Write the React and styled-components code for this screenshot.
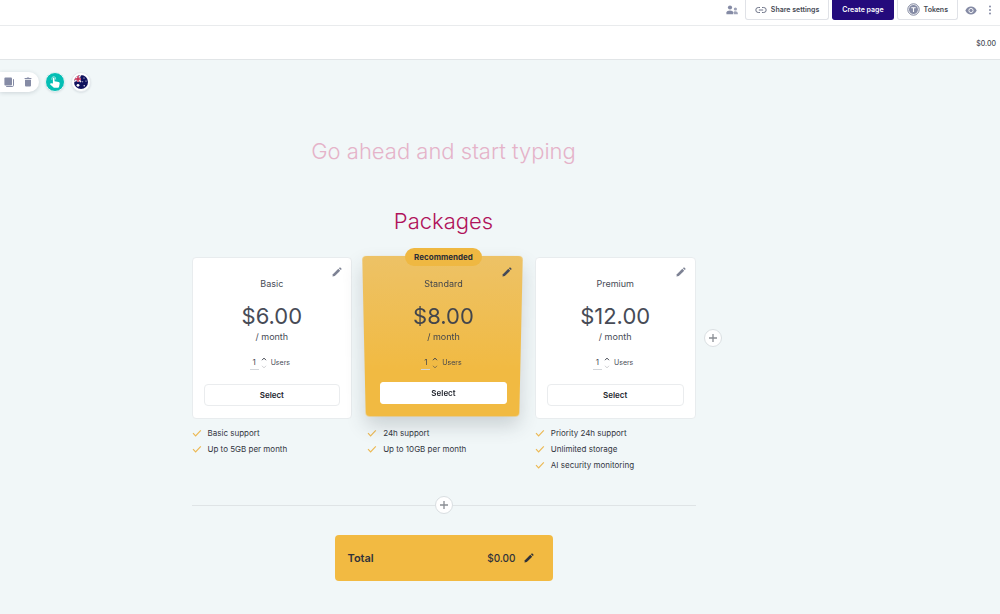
import React, { useState } from "react";
import styled, { createGlobalStyle, css } from "styled-components";

const packages = [
  {
    name: "Basic",
    price: "$6.00",
    features: ["Basic support", "Up to 5GB per month"]
  },
  {
    name: "Standard",
    price: "$8.00",
    recommended: true,
    features: ["24h support", "Up to 10GB per month"]
  },
  {
    name: "Premium",
    price: "$12.00",
    features: ["Priority 24h support", "Unlimited storage", "AI security monitoring"]
  }
];

// icons

const PencilIcon = ({ size = 10 }) => (
  <svg width={size} height={size} viewBox="0 0 10 10" fill="currentColor" aria-hidden="true">
    <path d="M0.5 9.5 L0.9 7.2 L6.3 1.8 L8.2 3.7 L2.8 9.1 Z" />
    <path d="M6.9 1.2 L7.6 0.6 Q8 0.3 8.4 0.6 L9.4 1.6 Q9.7 2 9.4 2.4 L8.8 3.1 Z" />
  </svg>
);

const PlusIcon = () => (
  <svg width="8" height="8" viewBox="0 0 8 8" stroke="currentColor" strokeWidth="1.3" aria-hidden="true">
    <path d="M4 0V8M0 4H8" />
  </svg>
);

const CheckIcon = () => (
  <svg width="10" height="8" viewBox="0 0 10 8" fill="none" stroke="#ecb954" strokeWidth="1.2" aria-hidden="true">
    <path d="M1 4.2L3.6 6.8L8.8 1.4" />
  </svg>
);

const ChevronIcon = ({ down }) => (
  <svg width="6" height="4" viewBox="0 0 6 4" fill="none" stroke="currentColor" strokeWidth="1" aria-hidden="true">
    <path d={down ? "M1 0.8L3 2.9L5 0.8" : "M1 3.2L3 1.1L5 3.2"} />
  </svg>
);

const PeopleIcon = () => (
  <svg width="12" height="10" viewBox="0 0 12 10" fill="currentColor" aria-hidden="true">
    <circle cx="4" cy="2.5" r="2.1" />
    <path d="M0.4 9.2V7.4Q0.8 5.4 4 5.4Q7 5.4 7.3 7.2V9.2Z" />
    <circle cx="9.4" cy="4" r="1.6" opacity="0.8" />
    <path d="M8 9.2V7.4Q8 6.9 7.8 6.4Q11.6 5.7 11.8 8V9.2Z" opacity="0.8" />
  </svg>
);

const LinkIcon = () => (
  <svg width="12" height="8" viewBox="0 0 12 8" fill="none" stroke="#6f7589" strokeWidth="1" aria-hidden="true">
    <path d="M5 1.5H3.3A2.5 2.5 0 0 0 3.3 6.5H5M7 1.5H8.7A2.5 2.5 0 0 1 8.7 6.5H7M3.8 4H8.2" />
  </svg>
);

const TokenIcon = () => (
  <svg width="13" height="13" viewBox="0 0 13 13" aria-hidden="true">
    <circle cx="6.5" cy="6.5" r="5.7" fill="#fff" stroke="#7d839c" strokeWidth="1" />
    <circle cx="6.5" cy="6.5" r="4.5" fill="#858ba5" />
    <path d="M4.3 4.7H8.7M6.5 4.7V9" stroke="#fff" strokeWidth="1.1" />
  </svg>
);

const EyeIcon = () => (
  <svg width="12" height="9" viewBox="0 0 12 9" aria-hidden="true">
    <path d="M0.3 4.5Q2.2 0.6 6 0.6Q9.8 0.6 11.7 4.5Q9.8 8.4 6 8.4Q2.2 8.4 0.3 4.5Z" fill="currentColor" />
    <circle cx="6" cy="4.5" r="2.1" fill="currentColor" stroke="#fff" strokeWidth="0.9" />
  </svg>
);

const DotsIcon = () => (
  <svg width="4" height="10" viewBox="0 0 4 10" fill="currentColor" aria-hidden="true">
    <circle cx="2" cy="1.4" r="1" />
    <circle cx="2" cy="5" r="1" />
    <circle cx="2" cy="8.6" r="1" />
  </svg>
);

const CopyIcon = () => (
  <svg width="10" height="10" viewBox="0 0 10 10" aria-hidden="true">
    <path d="M2.2 9.5H8.3Q9.5 9.5 9.5 8.3V2.2" fill="none" stroke="currentColor" strokeWidth="1" />
    <rect x="0.4" y="0.4" width="7.6" height="8" rx="1" fill="currentColor" />
  </svg>
);

const TrashIcon = () => (
  <svg width="8" height="10" viewBox="0 0 8 10" fill="currentColor" aria-hidden="true">
    <path d="M0.6 1H2.6L3.1 0.4H4.9L5.4 1H7.4V2H0.6Z" />
    <path d="M1 2.8H7V8.4Q7 9.4 6 9.4H2Q1 9.4 1 8.4Z" />
  </svg>
);

const HandIcon = () => (
  <svg width="12" height="13" viewBox="0 0 12 13" aria-hidden="true">
    <path
      d="M3.9 7.6V2.6Q3.9 1.6 4.7 1.6Q5.5 1.6 5.5 2.6V5.2L9.6 6.1Q10.8 6.4 10.7 7.5L10.1 10.6Q9.9 11.8 8.8 11.8H5.6Q4.8 11.8 4.3 11.2L1 8.2Q1.2 7.1 2.3 7.2Z"
      fill="#fff"
    />
    <path d="M2.8 3.8Q2.4 0.7 4.7 0.6Q7 0.7 6.7 3.6" fill="none" stroke="#b7ece8" strokeWidth="0.8" />
  </svg>
);

const FlagIcon = () => (
  <svg width="14" height="14" viewBox="0 0 14 14" aria-hidden="true">
    <clipPath id="flagRound">
      <circle cx="7" cy="7" r="7" />
    </clipPath>
    <g clipPath="url(#flagRound)">
      <rect width="14" height="14" fill="#10125e" />
      <path d="M0 0L7 7M7 0L0 7" stroke="#f6e7ed" strokeWidth="1.5" />
      <path d="M4 0V7M0 4H7" stroke="#f6e7ed" strokeWidth="2.4" />
      <path d="M4 0V7M0 4H7" stroke="#c5264c" strokeWidth="1.4" />
      <circle cx="4" cy="10.3" r="1.4" fill="#fff" />
      <circle cx="10" cy="3" r="0.6" fill="#fff" />
      <circle cx="12" cy="6" r="0.6" fill="#fff" />
      <circle cx="8.7" cy="6.8" r="0.5" fill="#fff" />
      <circle cx="10.2" cy="10.8" r="0.7" fill="#fff" />
    </g>
  </svg>
);

const PackageCard = ({ item }) => {
  const [users, setUsers] = useState(1);
  const id = "users-" + item.name;

  return (
    <Card $recommended={item.recommended}>
      {item.recommended && <Ribbon>Recommended</Ribbon>}
      <EditButton $dark={item.recommended} aria-label={"Edit " + item.name}>
        <PencilIcon />
      </EditButton>
      <CardTitle>{item.name}</CardTitle>
      <Price>{item.price}</Price>
      <Period>/ month</Period>
      <UsersRow>
        <UsersInput id={id} value={users} onChange={e => setUsers(Number(e.target.value) || 0)} />
        <Stepper $recommended={item.recommended}>
          <button aria-label="More users" onClick={() => setUsers(users + 1)}>
            <ChevronIcon />
          </button>
          <button aria-label="Fewer users" disabled={users < 2} onClick={() => setUsers(users - 1)}>
            <ChevronIcon down />
          </button>
        </Stepper>
        <label htmlFor={id}>Users</label>
      </UsersRow>
      <SelectButton $recommended={item.recommended}>Select</SelectButton>
    </Card>
  );
};

const App = () => (
  <>
    <GlobalStyle />
    <Header>
      <IconButton aria-label="People">
        <PeopleIcon />
      </IconButton>
      <HeaderActions>
        <HeaderButton>
          <LinkIcon />
          Share settings
        </HeaderButton>
        <HeaderButton $primary>Create page</HeaderButton>
        <HeaderButton>
          <TokenIcon />
          Tokens
        </HeaderButton>
      </HeaderActions>
      <MenuIcons>
        <IconButton aria-label="Preview">
          <EyeIcon />
        </IconButton>
        <IconButton aria-label="More">
          <DotsIcon />
        </IconButton>
      </MenuIcons>
    </Header>
    <SumBar>$0.00</SumBar>

    <Toolbar>
      <Pill>
        <IconButton aria-label="Copy">
          <CopyIcon />
        </IconButton>
        <IconButton aria-label="Delete">
          <TrashIcon />
        </IconButton>
      </Pill>
      <RoundButton $teal aria-label="Interact">
        <HandIcon />
      </RoundButton>
      <RoundButton aria-label="Language">
        <FlagIcon />
      </RoundButton>
    </Toolbar>

    <Page>
      <Content>
        <Headline aria-label="Headline" placeholder="Go ahead and start typing" />
        <SectionTitle>Packages</SectionTitle>
        <Packages>
          {packages.map(item => (
            <div key={item.name}>
              <PackageCard item={item} />
              <Features $indent={item.recommended}>
                {item.features.map(feature => (
                  <li key={feature}>
                    <CheckIcon />
                    {feature}
                  </li>
                ))}
              </Features>
            </div>
          ))}
          <AddPackage aria-label="Add package">
            <PlusIcon />
          </AddPackage>
        </Packages>
        <Divider>
          <AddButton aria-label="Add section">
            <PlusIcon />
          </AddButton>
        </Divider>
        <Total>
          <strong>Total</strong>
          <span>$0.00</span>
          <PlainButton aria-label="Edit total">
            <PencilIcon />
          </PlainButton>
        </Total>
      </Content>
    </Page>
  </>
);

const GlobalStyle = createGlobalStyle`
  * {
    box-sizing: border-box;
  }

  body {
    margin: 0;
    background: #f1f7f8;
    color: #474b56;
    font-family: Inter, "Liberation Sans", sans-serif;
    font-size: 8px;
  }

  button, input {
    font-family: inherit;
    color: inherit;
  }

  button {
    padding: 0;
    cursor: pointer;
  }

  svg {
    display: block;
    flex: none;
  }
`

const PlainButton = styled.button`
  border: none;
  background: transparent;
`

const IconButton = styled(PlainButton)`
  color: #858ba5;
`

const Header = styled.header`
  display: flex;
  justify-content: flex-end;
  height: 26px;
  padding: 0 8px 5px 0;
  background: #fff;
  border-bottom: 1px solid #e9ebed;
`

const HeaderActions = styled.div`
  display: flex;
  gap: 3px;
  margin: 0 7px;
`

const HeaderButton = styled.button`
  display: flex;
  align-items: center;
  gap: 4px;
  padding: 0 9px;
  border: 1px solid #e0e2e7;
  border-top: none;
  border-radius: 0 0 3px 3px;
  background: #fff;
  color: #454954;
  font-size: 7px;
  font-weight: 600;

  ${props => props.$primary && css`
    border-color: #240b7c;
    background: #240b7c;
    color: #fff;
  `}
`

const MenuIcons = styled.div`
  display: flex;
  gap: 11px;
`

const SumBar = styled.div`
  height: 34px;
  padding-right: 4px;
  background: #fff;
  border-bottom: 1px solid #e1e5e7;
  font-size: 7px;
  font-weight: 500;
  line-height: 35px;
  text-align: right;
`

const Toolbar = styled.div`
  display: flex;
  align-items: center;
  gap: 6px;
  padding-top: 12px;
`

const Pill = styled.div`
  display: flex;
  align-items: center;
  gap: 10px;
  height: 20px;
  padding: 0 7px 0 4px;
  border-radius: 0 10px 10px 0;
  background: #fff;
  box-shadow: 0 1px 4px rgba(40, 60, 80, 0.18);
`

const RoundButton = styled.button`
  display: grid;
  place-items: center;
  width: 20px;
  height: 20px;
  border: 1px solid #e6ebee;
  border-radius: 50%;
  background: #fff;
  box-shadow: 0 1px 2px rgba(40, 60, 80, 0.12);

  ${props => props.$teal && css`
    border-color: #e6f4f4;
    background: #04beb4;
  `}
`

const Page = styled.main`
  padding: 41px 113px 32px 0;
`

const Content = styled.div`
  width: 504px;
  max-width: 100%;
  margin: 0 auto;
`

const Headline = styled.input`
  display: block;
  width: 100%;
  height: 36px;
  padding: 0;
  border: none;
  outline: none;
  background: transparent;
  color: #b0125a;
  font-size: 22px;
  font-weight: 300;
  text-align: center;

  &::placeholder {
    color: #e5b3c9;
    opacity: 1;
  }
`

const SectionTitle = styled.h2`
  margin: 35px 0 19px;
  color: #b0125a;
  font-size: 22px;
  font-weight: 300;
  line-height: 34px;
  text-align: center;
`

const Packages = styled.section`
  position: relative;
  display: grid;
  grid-template-columns: repeat(3, 1fr);
  gap: 11px;
`

const Card = styled.article`
  position: relative;
  display: flex;
  flex-direction: column;
  align-items: center;
  height: 162px;
  padding: 20px 11px 12px;
  border: 1px solid #e8ecee;
  border-radius: 4px;
  background: #fff;

  ${props => props.$recommended && css`
    z-index: 0;
    padding: 20px 16px 14px;
    border-color: transparent;
    background: transparent;
    color: #42454c;

    /* tilted sheet behind the content */
    &::before {
      content: "";
      position: absolute;
      z-index: -1;
      inset: -1px 2px -1px 0;
      border-radius: 4px;
      background: linear-gradient(#edc266, #f1ba42 70%);
      box-shadow: 0 10px 20px rgba(50, 60, 70, 0.2);
      transform: perspective(500px) rotateX(-8deg);
    }
  `}
`

const Ribbon = styled.div`
  position: absolute;
  top: -10px;
  padding: 0 9px;
  border-radius: 9px;
  background: #efb842;
  color: #2b2d36;
  font-size: 8px;
  font-weight: 700;
  line-height: 18px;
`

const EditButton = styled(PlainButton)`
  position: absolute;
  top: 9px;
  right: ${props => props.$dark ? "11px" : "9px"};
  color: ${props => props.$dark ? "#454a58" : "#7d8294"};
`

const CardTitle = styled.h3`
  margin: 0;
  font-size: 9px;
  font-weight: 400;
  line-height: 12px;
`

const Price = styled.div`
  margin-top: 11px;
  font-size: 22px;
  line-height: 30px;
`

const Period = styled.div`
  font-size: 9px;
  line-height: 12px;
`

const UsersRow = styled.div`
  display: flex;
  align-items: center;
  gap: 2px;
  margin-top: 12px;
  padding-right: 4px;
  font-size: 7px;

  label {
    padding-left: 2px;
  }
`

const UsersInput = styled.input`
  width: 9px;
  height: 15px;
  padding: 0;
  border: none;
  border-bottom: 1px solid #d3d6da;
  background: transparent;
  font-size: 8px;
  text-align: center;
`

const Stepper = styled.div`
  display: grid;
  gap: 4px;

  button {
    border: none;
    background: transparent;
  }

  button:disabled {
    opacity: ${props => props.$recommended ? 0.6 : 0.25};
  }
`

const SelectButton = styled.button`
  width: 100%;
  height: 22px;
  margin-top: auto;
  border: 1px solid #eaecee;
  border-radius: 4px;
  background: #fff;
  color: #22252e;
  font-size: 8px;
  font-weight: 600;

  ${props => props.$recommended && css`
    border-color: #fff;
    border-radius: 3px;
  `}
`

const Features = styled.ul`
  margin: 6px 0 0;
  padding: 0 0 0 ${props => props.$indent ? "4px" : "0"};
  list-style: none;
  color: #33363f;
  font-size: 8px;
  line-height: 16px;

  li {
    display: flex;
    align-items: center;
    gap: 6px;
  }
`

const AddButton = styled.button`
  display: grid;
  place-items: center;
  width: 18px;
  height: 18px;
  border: 1px solid #d9dee1;
  border-radius: 50%;
  background: #fff;
  color: #8a8e94;
`

const AddPackage = styled(AddButton)`
  position: absolute;
  top: 72px;
  right: -26px;
`

const Divider = styled.div`
  display: flex;
  align-items: center;
  margin-top: 23px;

  &::before, &::after {
    content: "";
    flex: 1;
    border-top: 1px solid #dfe4e6;
  }
`

const Total = styled.div`
  display: flex;
  align-items: center;
  gap: 8px;
  width: 218px;
  height: 46px;
  margin: 21px auto 0;
  padding: 0 19px 0 13px;
  border-radius: 4px;
  background: #f2ba42;
  color: #30323a;
  font-size: 10px;
  font-weight: 500;

  strong {
    flex: 1;
    font-size: 11px;
    font-weight: 600;
  }
`

export default App;
